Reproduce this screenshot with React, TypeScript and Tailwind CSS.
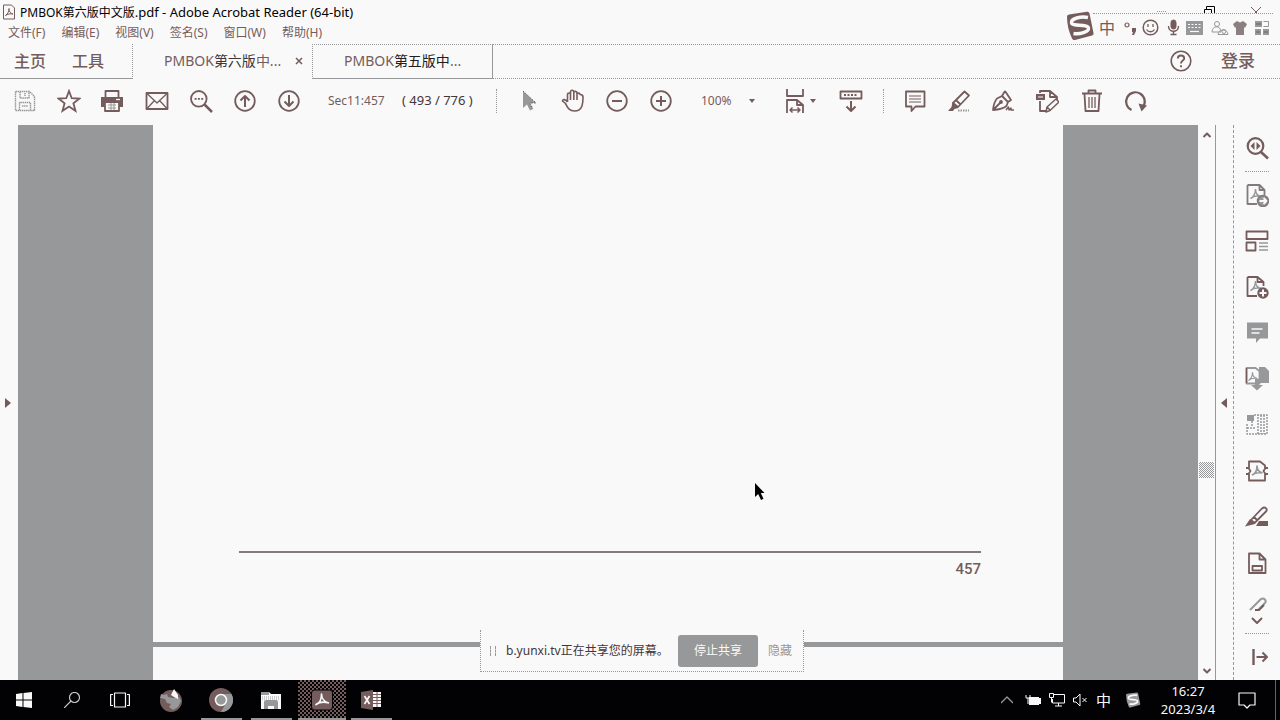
import type { ReactNode } from 'react';

type IconProps = { children: ReactNode; className?: string; box?: string };

function Icon({ children, className = 'size-6', box = '0 0 24 24' }: IconProps) {
  return (
    <svg
      viewBox={box}
      className={`block shrink-0 ${className}`}
      fill="none"
      stroke="currentColor"
      strokeWidth="1.8"
      strokeLinejoin="round"
      aria-hidden="true"
    >
      {children}
    </svg>
  );
}

function Tool({ label, children, muted = false }: { label: string; children: ReactNode; muted?: boolean }) {
  return (
    <button type="button" aria-label={label} className={`shrink-0 ${muted ? 'text-[#979899]' : 'text-[#755c5c]'}`}>
      <Icon>{children}</Icon>
    </button>
  );
}

function Caret() {
  return (
    <svg viewBox="0 0 8 6" className="block h-[6px] w-2 shrink-0 text-[#755c5c]" fill="currentColor" aria-hidden="true">
      <path d="M1 1h6L4 5z" />
    </svg>
  );
}

const trefoil = 'M5.5 15.5c3-1.500 5-5.500 5-9.500M10.500 6c0 4 2 7 6 7.500M5.500 15.500c2.500-2.500 7-3 11-2';

function SogouMark({ className }: { className: string }) {
  return (
    <svg viewBox="0 0 30 30" className={`block shrink-0 ${className}`} fill="none" aria-hidden="true">
      <path d="M2 5.500Q2 4 4 3.500L22 .8Q24 .5 24.500 2.500L28.500 22Q29 24 27 24.500L10 29Q8 29.500 7 27.500Q2 17 2 5.500Z" fill="currentColor" />
      <path d="M23 6.500C16 5 5.500 7.500 6.500 12c1 4 16 .5 17 5 .6 4-9 6.500-15 5.500" stroke="#f9f9f9" strokeWidth="3.400" />
    </svg>
  );
}

const menus = ['文件(F)', '编辑(E)', '视图(V)', '签名(S)', '窗口(W)', '帮助(H)'];

function TitleArea() {
  return (
    <header className="relative h-[44px] shrink-0">
      <div className="flex h-6 items-center justify-between">
        <h1 className="flex items-center gap-1 pl-[2px] text-xs text-[#020204]">
          <Icon className="h-4 w-[14px] text-[#755c5c]" box="0 0 14 16">
            <path strokeWidth="1" d="M1.500 1h8l3 3v11h-11zM3.500 11.500C6 10 7 7 7 4.500c0 3 1.500 5 4 5.500M3.500 11.500c2-1.500 5-2 7.500-1.500" />
          </Icon>
          <span className="whitespace-pre">
            PMBOK第六版中文版<span className="text-[13px] leading-4">.pdf - Adobe Acrobat Reader (64-bit)</span>
          </span>
        </h1>
        <div className="flex items-center gap-[35px] pr-[18px] text-[#020204]">
          <button type="button" aria-label="最小化" className="text-[#979899]">
            <Icon className="size-3" box="0 0 12 12"><path strokeWidth="1" strokeDasharray="1 1" d="M1 5.500h10" /></Icon>
          </button>
          <button type="button" aria-label="还原">
            <Icon className="size-3" box="0 0 12 12"><path strokeWidth="1" d="M1.500 3.500h7v8h-7zM3.500 3.500v-3h8v8h-3" /></Icon>
          </button>
          <button type="button" aria-label="关闭" className="text-[#755c5c]">
            <Icon className="size-3" box="0 0 12 12"><path strokeWidth="1" d="M1 1l10 10M11 1L1 11" /></Icon>
          </button>
        </div>
      </div>
      <nav className="flex h-[17px] items-center gap-4 pl-2 text-xs text-[#755c5c]">
        {menus.map((m) => (
          <button type="button" key={m}>{m}</button>
        ))}
      </nav>
      <div className="absolute top-[13px] right-[7px] flex items-center">
        <span className="z-10 -mr-[2px] -mt-[2px] text-[#755c5c]"><SogouMark className="size-[30px]" /></span>
        <div className="flex h-[28px] items-center border-t border-dotted border-[#979899] bg-[#f9f9f9] pr-1 pl-[6px] text-[#755c5c]">
          <span className="mr-2 text-base leading-6">中</span>
          <Icon className="mr-[5px] h-4 w-[14px]" box="0 0 14 16">
            <circle cx="4" cy="5" r="2" strokeWidth="1.200" />
            <path fill="currentColor" stroke="none" d="M9 8h4v3l-2 4H9l1-3H9z" />
          </Icon>
          <Icon className="mr-2 size-[17px]" box="0 0 17 17">
            <circle cx="8.500" cy="8.500" r="7.300" strokeWidth="1.500" />
            <path strokeWidth="1.300" d="M6 5v3M11 5v3M4.500 10.500c2 3 6 3 8 0" />
          </Icon>
          <Icon className="mr-[6px] h-[17px] w-[13px]" box="0 0 13 17">
            <rect x="4" y="1" width="5" height="9" rx="2.500" fill="currentColor" strokeWidth="1" />
            <path strokeWidth="1.400" d="M1.500 7c0 7 10 7 10 0M6.500 12.500v3M3.500 15.500h6" />
          </Icon>
          <Icon className="mr-2 h-[14px] w-[17px] text-[#979899]" box="0 0 17 14">
            <path fill="currentColor" stroke="none" d="M0 0h17v14H0z" />
            <path stroke="#f9f9f9" strokeWidth="1.200" strokeDasharray="2 1.500" d="M2 3.500h13M2 6.500h13" />
            <path stroke="#f9f9f9" strokeWidth="1.200" d="M4 10.500h9" />
          </Icon>
          <Icon className="mr-1 h-4 w-[18px] text-[#979899]" box="0 0 18 16">
            <circle cx="6" cy="4" r="2.500" strokeWidth="1" />
            <path strokeWidth="1" d="M1 12c0-7 9-7 9 0zM7 14.500c0-6 10-6 10 0z" />
            <circle cx="13" cy="11.500" r="2" strokeWidth="1" />
          </Icon>
          <Icon className="mr-2 h-[14px] w-[14px] text-[#755c5c]" box="0 0 14 14">
            <path fill="#8b8081" stroke="none" d="M4 0l3 1.500L10 0l4 3-2 4-1-1v8H3V6L2 7 0 3z" />
          </Icon>
          <Icon className="h-[14px] w-[14px]" box="0 0 14 14">
            <path fill="#979899" stroke="none" d="M0 0h7v6H0zM0 8h6v6H0zM8 8h6v6H8z" />
            <path stroke="#979899" strokeWidth="1" d="M8.500.500h5v5h-5" />
            <path stroke="#755c5c" strokeWidth="1" d="M1 3h5M1 11h4M9 11h4" />
          </Icon>
        </div>
      </div>
    </header>
  );
}

function TabStrip() {
  return (
    <div className="flex h-[35px] shrink-0 text-[#755c5c]">
      <nav className="flex w-[133px] shrink-0 items-center gap-[26px] border-r border-b border-[#979899] pb-px pl-[14px] text-base leading-none font-medium [border-right-style:dotted]">
        <button type="button">主页</button>
        <button type="button">工具</button>
      </nav>
      <div className="flex w-[179px] shrink-0 items-center justify-between pr-[9px] pb-[2px] pl-[31px] text-sm leading-none">
        <button type="button">PMBOK<span className="text-[#433639]">第六版</span>中...</button>
        <button type="button" aria-label="关闭标签">
          <Icon className="size-2" box="0 0 8 8"><path strokeWidth="1.500" d="M1 1l6 6M7 1L1 7" /></Icon>
        </button>
      </div>
      <div className="flex w-[181px] shrink-0 items-center border border-[#979899] pb-[2px] pl-[31px] text-sm leading-none [border-left-style:dotted] [border-top-style:dotted]">
        <button type="button">PMBOK<span className="text-[#241d20]">第五版中</span>...</button>
      </div>
      <div className="flex grow items-center justify-end gap-[29px] border-y border-dotted border-[#979899] pr-[25px] pb-[2px]">
        <button type="button" aria-label="帮助">
          <Icon className="size-[22px]" box="0 0 22 22">
            <circle cx="11" cy="11" r="9.800" strokeWidth="1.600" />
            <path d="M7.800 8.500c0-4 6.400-4 6.400 0 0 2.200-3.200 2-3.200 5M11 15.300v2" strokeWidth="1.900" />
          </Icon>
        </button>
        <button type="button" className="text-[17px] leading-none font-medium">登录</button>
      </div>
    </div>
  );
}

function Toolbar() {
  return (
    <div className="flex h-[46px] shrink-0 items-center pb-[2px] pl-[13px] text-[#755c5c]">
      <div className="flex gap-5">
        <Tool label="保存" muted>
          <path strokeWidth="1.400" strokeDasharray="1.500 .6" d="M2.500 2.500h14l5 5v14h-19zM7 3v6h9V3M12 4v3M6.500 21v-7.500h11V21M9 17h6" />
        </Tool>
        <Tool label="收藏">
          <path strokeLinejoin="miter" d="M12 2l2.700 7.200 7.800.3-6.100 4.800 2.100 7.500L12 17.500l-6.500 4.300 2.100-7.500L1.500 9.500l7.800-.3z" />
        </Tool>
        <Tool label="打印">
          <g transform="translate(-1 0)">
            <path d="M5.500 8V2h13v6" />
            <path fill="currentColor" stroke="none" d="M1 8h22v10h-4v-5H5v5H1z" />
            <path stroke="#f9f9f9" strokeWidth="1.300" d="M16 10.500h4" />
            <path d="M5 13h14v9H5z" fill="#f9f9f9" />
            <path stroke="#979899" strokeWidth="1" d="M8 16h8M8 19h8M11 14v7M14 14v7" />
          </g>
        </Tool>
        <Tool label="电子邮件">
          <path d="M1.500 4h21v16h-21z" />
          <path strokeWidth="1.300" d="M2 4.500l10 9.500 10-9.500M2 19.500l7.500-8M22 19.500l-7.500-8" />
        </Tool>
        <Tool label="查找">
          <circle cx="9.800" cy="9.800" r="7.800" />
          <path strokeWidth="2.500" d="M15.500 15.500l7.500 7.500" />
          <path strokeWidth="1.700" strokeDasharray="2 1.300" d="M5.600 9.800h8.600" />
        </Tool>
        <Tool label="上一页">
          <circle cx="12" cy="12" r="9.800" />
          <path strokeWidth="2" d="M12 18V7M7.500 11.500L12 7l4.500 4.500" />
        </Tool>
        <Tool label="下一页">
          <circle cx="12" cy="12" r="9.800" />
          <path strokeWidth="2" d="M12 6v11M7.500 12.500L12 17l4.500-4.500" />
        </Tool>
      </div>
      <input aria-label="页码" defaultValue="Sec11:457" className="ml-[27px] w-16 bg-transparent text-xs" />
      <span className="ml-[10px] w-[82px] shrink-0 text-[13px] whitespace-nowrap text-[#433639]">( 493 / 776 )</span>
      <div className="ml-3 h-6 border-l border-dotted border-[#979899]" />
      <div className="ml-5 flex gap-5">
        <Tool label="选择" muted>
          <path fill="currentColor" stroke="none" d="M6 2v17l4-3.500 3 6 3-1.500-3-6h6z" />
          <path stroke="#755c5c" strokeWidth="1" strokeDasharray="1.500 1.500" d="M6 2l13 12h-6l3 6" />
        </Tool>
        <Tool label="抓手">
          <path strokeWidth="1.600" d="M6.500 13V5.500c0-2 3-2 3 0V11M9.500 5V3c0-2.300 3.300-2.300 3.300 0v8M12.800 4c0-2.300 3.200-2 3.200 0v7M16 5.500c0-1.800 3-1.800 3 0 .3 0 3 0 3 2.500 0 4 .5 14-8.500 14-6 0-7-4-9-7.500L1.500 12c0-2 3-2 5 1" />
        </Tool>
        <Tool label="缩小">
          <circle cx="12" cy="12" r="9.800" />
          <path strokeWidth="2" d="M7 12h10" />
        </Tool>
        <Tool label="放大">
          <circle cx="12" cy="12" r="9.800" />
          <path strokeWidth="2" d="M7 12h10M12 7v10" />
        </Tool>
      </div>
      <select aria-label="缩放" defaultValue="100%" className="ml-7 w-10 appearance-none bg-transparent text-xs">
        <option>100%</option>
      </select>
      <div className="ml-[7px]"><Caret /></div>
      <div className="ml-[27px] flex items-center gap-[2px]">
        <Tool label="适合宽度">
          <path d="M4 0v7h16V0M4 24V11h10l6 5v8M14 11v5h6" />
          <path strokeWidth="1.500" d="M7 21h10M9.500 18.500L7 21l2.500 2.500M14.500 18.500L17 21l-2.500 2.500" />
        </Tool>
        <Caret />
      </div>
      <div className="ml-[22px] flex">
        <Tool label="滚动">
          <path d="M1.500 2.500h21v7h-21z" />
          <path strokeWidth="2" strokeDasharray="2 1.500" d="M5 6h14" />
          <path strokeWidth="2" d="M12 12v9.500M7.500 17.500L12 22l4.500-4.500" />
        </Tool>
      </div>
      <div className="ml-5 h-6 border-l border-dotted border-[#979899]" />
      <div className="ml-[19px] flex gap-5">
        <Tool label="添加附注">
          <path d="M3 2.500h18.500v15h-9L8.500 22v-4.500H3z" />
          <path strokeWidth="1.200" d="M6 7h12M6 10h12M6 13h12" />
        </Tool>
        <Tool label="高亮文本">
          <path d="M6 14L17.500 2.500l4.500 4L11 18zM9 11l4.500 4.500" />
          <path fill="currentColor" stroke="none" d="M5.500 13l6 6-4 1-1.500 2H1l3.500-4z" />
          <path stroke="#979899" strokeDasharray="1.500 1" d="M11 21.500h11" />
        </Tool>
        <Tool label="签名">
          <path d="M2 21c.5-5 1-8 4-11.500L11 7l6 6-1.500 4c-3 2.500-7 3.500-13.500 4zM11 7l3-5M14 2l6 9-3 2M2.500 20.500l7-7" />
          <path strokeWidth="1.500" d="M15 21l2.500-3 .5 3 2-2v2h3" />
          <circle cx="10" cy="13" r="1" fill="currentColor" />
        </Tool>
        <Tool label="编辑注释">
          <path d="M5 4V2h10l7 6v3M15 2v6h7M5 12v10h6" />
          <path fill="currentColor" stroke="none" d="M1 5h9v6H1z" />
          <path stroke="#f9f9f9" strokeWidth="1" d="M3 8h5" />
          <path strokeWidth="1.500" d="M11 23l1-5 9-8 3 3-9 8.500zM12 18l3.500 3.500" />
        </Tool>
        <Tool label="删除">
          <g transform="translate(1 0)">
            <path d="M2 4.500h20M4.500 5l1 17h13l1-17M8.500 4V1.500h7V4" />
            <path strokeWidth="1.300" d="M9 8v11M12 8v11M15 8v11" />
          </g>
        </Tool>
        <Tool label="旋转">
          <path strokeWidth="2.200" d="M8.500 21A9.300 9.300 0 1 1 20 18" />
          <path fill="currentColor" stroke="none" d="M15.500 14.500l8.500 2-5.500 6z" />
        </Tool>
      </div>
    </div>
  );
}

function SidePane() {
  return (
    <aside className="flex w-[47px] shrink-0 flex-col items-center border-l border-dashed border-[#979899] pt-[11px]">
      <Tool label="搜索工具">
        <circle cx="10.500" cy="10" r="7.800" strokeWidth="2.200" />
        <path strokeWidth="2.600" d="M16 16l7 6.500" />
        <path fill="currentColor" stroke="none" d="M9.500 6v8L5.500 10zM11.500 6v8l4-4z" />
      </Tool>
      <div className="mt-[11px] w-6 border-t border-dotted border-[#979899]" />
      <div className="mt-[11px] flex flex-col gap-[22px]">
        <Tool label="导出 PDF" muted>
          <path stroke="#857a7b" d="M2.500 2h12l5 5v5M14.500 2v5h5M2.500 2v19H12" />
          <path strokeWidth="1.500" d={trefoil} />
          <circle cx="18" cy="18" r="5.300" fill="#979899" stroke="#857a7b" />
          <path stroke="#f9f9f9" strokeWidth="1.800" d="M14.500 18h7M18.500 15l3 3-3 3" />
        </Tool>
        <Tool label="组织页面">
          <path d="M1.500 2.500h21V10h-21zM1.500 13.500h9v8h-9z" />
          <path stroke="#979899" strokeWidth="1.500" d="M14 14h9M14 17.500h9M14 21h9" />
        </Tool>
        <Tool label="创建 PDF">
          <path d="M2.500 2h10l6 5v4M12.500 2v5h6M2.500 2v19H12" />
          <path stroke="#979899" strokeWidth="1.500" d={trefoil} />
          <circle cx="18" cy="18" r="5.700" fill="currentColor" stroke="none" />
          <path stroke="#f9f9f9" strokeWidth="2" d="M14.500 18h7M18 14.500v7" />
        </Tool>
        <Tool label="注释" muted>
          <path fill="currentColor" stroke="none" d="M2 1.500h21v16h-8L11 22v-4.500H2z" />
          <path stroke="#f9f9f9" strokeWidth="1.400" d="M6.500 8h11M6.500 12h8" />
        </Tool>
        <Tool label="合并文件" muted>
          <path fill="currentColor" stroke="none" d="M14 0h6l4 4v12H14z" />
          <path fill="#f9f9f9" d="M1.500 1h9l4 3v12.500h-13z" />
          <path stroke="#755c5c" strokeWidth="1.500" d="M1.500 16V1" />
          <path strokeWidth="1.200" d="M3.500 13.500c3-2 4-5 4-8 0 3 2 5.500 5 6M3.500 13.500c2-2 6-2.500 9-2" />
          <path fill="currentColor" stroke="none" d="M10 12h4v6h4l-6 5.500L6 18h4z" />
        </Tool>
        <Tool label="压缩 PDF" muted>
          <path strokeDasharray="2 1" strokeWidth="1.500" d="M2 11v10h20V2H13v19M9 2h4M16 2v19M19 2v19M2 15h8M7 8v6" />
          <path fill="currentColor" stroke="none" d="M2 2h7v6H2z" />
        </Tool>
        <Tool label="优化 PDF">
          <path d="M4 9V2.500h11l5 4V9M4 15v6.500h16V15M1 9h2.500l2 3-2 3H1M23 9h-2.500l-2 3 2 3H23" />
          <path stroke="#979899" strokeWidth="1.700" d="M7 16c3-1 5-4 5-9 0 4 2 6 5.500 7M7 16c3-2.500 7-2.500 10.500-2" />
        </Tool>
        <Tool label="填写和签名">
          <path d="M6 15L17 3.500c3-2.500 6 .5 4 3L9.500 18zM9 12l3.500 3.500" />
          <path fill="currentColor" stroke="none" d="M5 14l5 5-4 1-6 1.500zM14 16h9v5H11z" />
        </Tool>
        <Tool label="发送文件">
          <path d="M4 2.500h10.500l6 6v13.500H4zM14.500 2.500v6h6M7.500 15h9.500v4.500H7.500z" />
        </Tool>
      </div>
      <div className="mt-[22px] h-[14px] overflow-hidden">
        <Tool label="更多工具">
          <path strokeWidth="2" stroke="#979899" d="M5 13L16 2c3-1.500 6 1.500 4 4L9 17" />
          <path d="M10 13h4l5-5" />
        </Tool>
      </div>
      <button type="button" aria-label="向下滚动工具" className="mt-1 text-[#755c5c]">
        <Icon className="h-3 w-[14px]" box="0 0 14 12"><path strokeWidth="2" d="M2 3l5 5 5-5" /></Icon>
      </button>
      <div className="mt-[6px] w-6 border-t border-dotted border-[#979899]" />
      <div className="mt-[11px]">
        <Tool label="收起">
          <path strokeWidth="2.400" d="M8.500 4v16" />
          <path strokeWidth="2" d="M11.500 12H22M17.500 7.500L22 12l-4.500 4.500" />
        </Tool>
      </div>
    </aside>
  );
}

function ShareBar() {
  return (
    <div className="absolute bottom-2 left-1/2 ml-[2px] flex h-[42px] w-[324px] -translate-x-1/2 items-center border border-t-0 border-dotted border-[#979899] bg-[#f9f9f9] text-xs text-[#433639]">
      <span className="ml-[9px] flex h-[10px] w-[6px] shrink-0 justify-between border-x border-dashed border-[#979899]" />
      <span className="ml-[10px] w-[172px] shrink-0 whitespace-nowrap">b.yunxi.tv正在共享您的屏幕。</span>
      <button type="button" className="h-8 w-20 shrink-0 rounded-[3px] bg-[#979899] text-[#f9f9f9]">停止共享</button>
      <button type="button" className="ml-[10px] shrink-0 text-[#979899]">隐藏</button>
    </div>
  );
}

function DocumentArea() {
  return (
    <main className="relative flex min-h-0 grow">
      <button type="button" aria-label="展开导览窗格" className="flex w-[18px] shrink-0 items-center pl-1 text-[#755c5c]">
        <Icon className="h-3 w-2" box="0 0 8 12"><path fill="currentColor" stroke="none" d="M1 1l6 5-6 5z" /></Icon>
      </button>
      <div className="flex min-w-0 grow flex-col bg-[#979899] px-[135px]">
        <article className="flex grow flex-col justify-end bg-[#f9f9f9] pr-[82px] pb-[63px] pl-[86px] text-[#755c5c]">
          <div className="h-[2px] bg-[#85797a]" />
          <p className="mt-[6px] text-right font-[Roboto,sans-serif] text-[15px] leading-5 font-medium">457</p>
        </article>
        <div className="mt-[5px] h-[33px] shrink-0 bg-[#f9f9f9]" />
      </div>
      <div className="flex w-[18px] shrink-0 flex-col items-center justify-between border-r border-[#979899] py-1 text-[#755c5c]">
        <button type="button" aria-label="向上滚动">
          <Icon className="h-3 w-[10px]" box="0 0 10 12"><path strokeWidth="2" d="M1.500 8L5 4.500 8.500 8" /></Icon>
        </button>
        <div className="mt-[321px] h-4 w-[15px] bg-[repeating-conic-gradient(#979899_0_25%,#f9f9f9_0_50%)] bg-[length:2px_2px]" />
        <div className="grow" />
        <button type="button" aria-label="向下滚动">
          <Icon className="h-3 w-[10px]" box="0 0 10 12"><path strokeWidth="2" d="M1.500 5L5 8.500 8.500 5" /></Icon>
        </button>
      </div>
      <button type="button" aria-label="收起工具窗格" className="flex w-[17px] shrink-0 items-center pl-1 text-[#755c5c]">
        <Icon className="h-3 w-2" box="0 0 8 12"><path fill="currentColor" stroke="none" d="M7 1L1 6l6 5z" /></Icon>
      </button>
      <SidePane />
      <ShareBar />
      <svg viewBox="0 0 12 18" className="absolute top-[358px] left-[59%] h-[18px] w-3" aria-hidden="true">
        <path fill="#020204" d="M0 0v14l3.200-3 2.800 6 2.500-1.200L5.800 10H9.500z" />
      </svg>
    </main>
  );
}

const dither = 'bg-[repeating-conic-gradient(#755c5c_0_25%,#020204_0_50%)] bg-[length:4px_4px]';

function App() {
  return (
    <div className="flex h-screen flex-col overflow-hidden bg-[#f9f9f9] font-['Noto_Sans','Noto_Sans_CJK_SC',sans-serif]">
      <TitleArea />
      <TabStrip />
      <Toolbar />
      <DocumentArea />
      <footer className="flex h-10 shrink-0 items-center justify-between bg-[#020204] text-[#f9f9f9]">
        <div className="flex h-full items-stretch">
          <button type="button" aria-label="开始" className="flex w-12 items-center justify-center">
            <Icon className="size-4" box="0 0 16 16">
              <path fill="currentColor" stroke="none" d="M0 2l6.500-1v6.500H0zM7.500 1L16 0v7.500H7.500zM0 8.500h6.500V15L0 14zM7.500 8.500H16V16l-8.500-1z" />
            </Icon>
          </button>
          <button type="button" aria-label="搜索" className="flex w-12 items-center justify-center text-[#c8c6c7]">
            <Icon className="size-4" box="0 0 16 16"><circle cx="10.500" cy="5.500" r="5" strokeWidth="1.200" /><path strokeWidth="1.200" d="M7 9L0 16" /></Icon>
          </button>
          <button type="button" aria-label="任务视图" className="flex w-12 items-center justify-center">
            <Icon className="h-4 w-5" box="0 0 20 16"><path strokeWidth="1.200" d="M4.500 1h11v14h-11zM3 2.500H.6v11H3M17 2.500h2.400v11H17" /></Icon>
          </button>
          <button type="button" aria-label="Firefox" className="flex w-[54px] items-center justify-center">
            <Icon className="size-6">
              <circle cx="12" cy="13" r="11" fill="#755c5c" stroke="none" />
              <path fill="#979899" stroke="none" d="M2 6l3 1 3-1 1 3 5 1 6-1 2 4-3 6-5 3-4-3 2-3-4-1-2-4-5-1z" />
              <path fill="#f9f9f9" stroke="none" d="M12 7l3-6 4 6v4l-4-2z" />
            </Icon>
          </button>
          <button type="button" aria-label="Chrome" className="flex w-[46px] flex-col items-center pt-2">
            <Icon className="size-6">
              <circle cx="12" cy="12" r="12" fill="#755c5c" stroke="none" />
              <path fill="#979899" stroke="none" d="M12 6h10.400A12 12 0 0 1 12 24l5-9z" />
              <circle cx="12" cy="12" r="5.500" fill="#979899" stroke="#f9f9f9" strokeWidth="1.500" />
            </Icon>
            <span className="mt-auto h-[2px] w-[41px] bg-[#979899]" />
          </button>
          <button type="button" aria-label="文件资源管理器" className="ml-1 flex w-[46px] flex-col items-center pt-2">
            <Icon className="size-6">
              <path fill="#f9f9f9" stroke="none" d="M2 4h8l2 2h10v15H2z" />
              <path fill="#979899" stroke="none" d="M2 4h8v3H2zM5 21v-7q0-2 2-2h10q2 0 2 2v7h-4v-3H9v3z" />
              <path stroke="#979899" strokeWidth="1" strokeDasharray="1 1" d="M3 9h18M3 11h18" />
            </Icon>
            <span className="mt-auto h-[2px] w-[41px] bg-[#979899]" />
          </button>
          <button type="button" aria-label="Adobe Acrobat" className={`ml-1 flex w-12 flex-col items-center pt-2 ${dither}`}>
            <Icon className="size-6">
              <rect x="1.500" y="2" width="21" height="20" rx="3" fill="#755c5c" stroke="#020204" strokeWidth="1" />
              <path stroke="#f9f9f9" strokeWidth="1.600" d="M5.500 17c4-1.500 6-6 6-11 0 4 2.500 8 7.500 9M5.500 17c3-3 8-3.500 13.500-2" />
            </Icon>
            <span className="mt-auto h-[2px] w-full bg-[#979899]" />
          </button>
          <button type="button" aria-label="Excel" className="ml-[2px] flex w-[46px] flex-col items-center pt-2">
            <Icon className="size-6">
              <path fill="#f9f9f9" stroke="none" d="M13 4h9v15h-9z" />
              <path stroke="#755c5c" strokeWidth="1" d="M13 6.500h9M13 9.500h9M13 12.500h9M13 15.500h9M18 4v15" />
              <path fill="#755c5c" stroke="none" d="M2 4l12-2v20L2 20z" />
              <path stroke="#f9f9f9" strokeWidth="1.700" d="M5.500 8l5 8M10.500 8l-5 8" />
            </Icon>
            <span className="mt-auto h-[2px] w-[41px] bg-[#979899]" />
          </button>
        </div>
        <div className="flex h-full items-center">
          <button type="button" aria-label="显示隐藏的图标" className="mr-3 text-[#979899]">
            <Icon className="h-3 w-3" box="0 0 12 12"><path strokeWidth="1.300" d="M0 9l6-6 6 6" /></Icon>
          </button>
          <Icon className="mr-2 h-3 w-4" box="0 0 16 12">
            <path fill="currentColor" stroke="none" d="M4 3h10v1h2v6h-2v1H4z" />
            <path strokeWidth="1" d="M1 1v3h4V1M3 4v6" />
          </Icon>
          <Icon className="mr-2 h-[14px] w-4" box="0 0 16 14">
            <path strokeWidth="1" d="M4 1.500h11.500v8.500H3.500V6M.500.500h4v4h-4zM2.500 4.500v5M6 13h7M9.500 10v3" />
          </Icon>
          <Icon className="mr-2 h-[14px] w-[15px]" box="0 0 15 14">
            <path strokeWidth="1" d="M.500 5h2.500l4-4v12L3 9H.500zM9.500 5l4 4M13.500 5l-4 4" />
          </Icon>
          <span className="mr-[14px] text-[15px] leading-none">中</span>
          <span className="mr-[18px] text-[#979899]"><SogouMark className="size-4" /></span>
          <time className="w-[58px] text-center text-[13px] leading-[18px] whitespace-nowrap">
            16:27<br />2023/3/4
          </time>
          <button type="button" aria-label="通知" className="mr-[19px] ml-[21px]">
            <Icon className="size-[18px]" box="0 0 18 18"><path strokeWidth="1.200" d="M1 2h16v12h-5l-3 3-3-3H1z" /></Icon>
          </button>
          <div className="mr-1 h-full w-px bg-[#755c5c]" />
        </div>
      </footer>
    </div>
  );
}

export default App;
